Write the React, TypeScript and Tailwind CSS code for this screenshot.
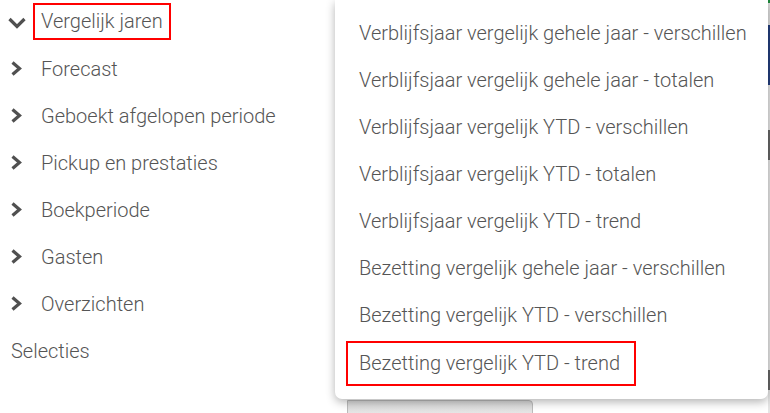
import React from 'react';

const sections = [
  'Forecast',
  'Geboekt afgelopen periode',
  'Pickup en prestaties',
  'Boekperiode',
  'Gasten',
  'Overzichten',
];

const reports = [
  'Verblijfsjaar vergelijk gehele jaar - verschillen',
  'Verblijfsjaar vergelijk gehele jaar - totalen',
  'Verblijfsjaar vergelijk YTD - verschillen',
  'Verblijfsjaar vergelijk YTD - totalen',
  'Verblijfsjaar vergelijk YTD - trend',
  'Bezetting vergelijk gehele jaar - verschillen',
  'Bezetting vergelijk YTD - verschillen',
];

const ChevronDown = () => (
  <svg width="20" height="12" viewBox="0 0 20 12" className="ml-[7px] mt-[3px]">
    <polyline points="2.5,2 10,9.5 17.5,2" fill="none" stroke="#505050" strokeWidth="3.2" />
  </svg>
);

const ChevronRight = () => (
  <svg width="13" height="15" viewBox="0 0 13 15" className="ml-[10px]">
    <polyline points="2.5,1.5 9.5,7.5 2.5,13.5" fill="none" stroke="#505050" strokeWidth="3.2" />
  </svg>
);

export default function App() {
  return (
    <div
      className="relative w-[770px] h-[413px] overflow-hidden bg-white text-[20px] font-light text-[#555]"
      style={{ fontFamily: 'Roboto, "Noto Sans", sans-serif' }}
    >
      <div className="flex h-full">
        {/* left tree */}
        <div className="w-[335px] -mt-[2px]">
          <div className="flex items-center h-[47px]">
            <ChevronDown />
            <span className="ml-[6px] -mt-[1px] border-2 border-[#f00] h-[37px] flex items-center pl-[6px] pr-[6px] w-[138px] whitespace-nowrap">
              Vergelijk jaren
            </span>
          </div>
          {sections.map((s) => (
            <div key={s} className="flex items-center h-[47px]">
              <ChevronRight />
              <span className="ml-[18px] whitespace-nowrap">{s}</span>
            </div>
          ))}
          <div className="flex items-center h-[47px] pl-[11px]">Selecties</div>
        </div>

        {/* page content behind the menu */}
        <div className="flex-1 flex">
          <div className="flex-1 pt-[400px] pl-[12px]">
            <div className="w-[186px] h-[20px] rounded-tr-[4px] border border-[#bbb] bg-gradient-to-b from-[#d8d8d8] to-[#ececec]" />
          </div>
          <div className="w-[2px] flex flex-col">
            <div className="h-[3px] bg-[#1e8a3c]" />
            <div className="h-[22px] bg-[#ddd]" />
            <div className="h-[60px] bg-[#233e7d]" />
            <div className="h-[45px] bg-[#e5e5e5]" />
            <div className="h-[30px] bg-[#666]" />
            <div className="h-[210px] bg-[#e5e5e5]" />
            <div className="h-[20px] bg-[#666]" />
            <div className="flex-1 bg-[#e5e5e5]" />
          </div>
        </div>
      </div>

      {/* dropdown menu */}
      <div className="absolute left-[335px] top-0 w-[433px] bg-white rounded-b-[7px] shadow-[0_3px_10px_rgba(0,0,0,0.3)] pt-[9px] pb-[14px]">
        {reports.map((r) => (
          <div key={r} className="h-[47px] flex items-center pl-[24px] whitespace-nowrap">
            {r}
          </div>
        ))}
        <div className="h-[47px] flex items-center">
          <div className="ml-[11px] mt-[3px] w-[290px] h-[45px] border-2 border-[#f00] flex items-center pl-[11px] whitespace-nowrap">
            Bezetting vergelijk YTD - trend
          </div>
        </div>
      </div>
    </div>
  );
}
